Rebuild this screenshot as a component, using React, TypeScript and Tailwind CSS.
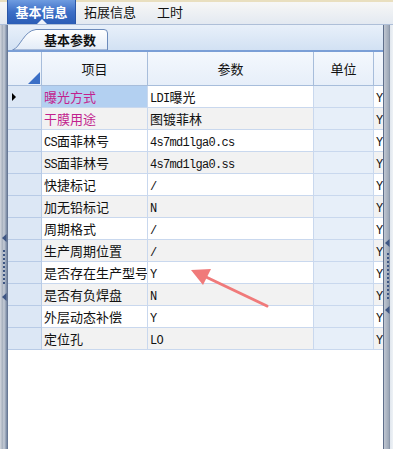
import React from "react";

type Row = { label: string; value: string; pink?: boolean };

const rows: Row[] = [
  { label: "曝光方式", value: "LDI曝光", pink: true },
  { label: "干膜用途", value: "图镀菲林", pink: true },
  { label: "CS面菲林号", value: "4s7md1lga0.cs" },
  { label: "SS面菲林号", value: "4s7md1lga0.ss" },
  { label: "快捷标记", value: "/" },
  { label: "加无铅标记", value: "N" },
  { label: "周期格式", value: "/" },
  { label: "生产周期位置", value: "/" },
  { label: "是否存在生产型号", value: "Y" },
  { label: "是否有负焊盘", value: "N" },
  { label: "外层动态补偿", value: "Y" },
  { label: "定位孔", value: "LO" },
];

// latin runs get the narrow mono font, like the half-width glyphs of the original
function Mixed({ text }: { text: string }) {
  return (
    <>
      {text
        .split(/([\x20-\x7e]+)/)
        .filter(Boolean)
        .map((s, i) =>
          /^[\x20-\x7e]+$/.test(s) ? (
            <span key={i} className="font-['Liberation_Mono',monospace] text-[12px] tracking-[-0.7px]">
              {s}
            </span>
          ) : (
            <span key={i}>{s}</span>
          )
        )}
    </>
  );
}

function SplitArrow() {
  return (
    <svg width="5" height="8" viewBox="0 0 5 8">
      <path d="M4.5 0 L0 4 L4.5 8Z" fill="#3e5684" />
    </svg>
  );
}

export default function App() {
  return (
    <div className="relative w-[393px] h-[449px] overflow-hidden bg-white font-['Noto_Sans_CJK_SC',sans-serif] text-[13px] text-[#111]">
      {/* Top tabs */}
      <div className="flex items-stretch h-[25px] border-b border-[#aebfd8] bg-[linear-gradient(to_bottom,#e9dfbf_0,#e9dfbf_2px,#f7f7f6_2px,#e3e9f1_100%)]">
        <div className="relative ml-[7px] w-[69px] flex items-center justify-center font-bold text-white bg-[linear-gradient(to_bottom,#6f9ce0,#3c6ec6_50%,#2b5db6)] border-x border-[#2a56a6]">
          基本信息
          <div className="absolute bottom-0 left-[29px] w-0 h-0 border-x-[5px] border-x-transparent border-b-[5px] border-b-[#eef3fa]" />
        </div>
        <div className="flex items-center ml-[8px]">拓展信息</div>
        <div className="flex items-center ml-[21px]">工时</div>
      </div>

      <div className="flex h-[424px]">
        {/* Left splitter */}
        <div className="w-[8px] flex flex-col items-start pl-[2px] pt-[209px] bg-[linear-gradient(to_right,#d3d7de,#a9b2bf_30%,#c5ccd7_50%,#8796ad_78%,#5c6d8c)]">
          <SplitArrow />
          <div className="mt-[8px] ml-[1px] h-[36px] w-[2px] bg-[repeating-linear-gradient(to_bottom,#3e5684_0_2px,transparent_2px_4px)]" />
          <div className="mt-[7px]">
            <SplitArrow />
          </div>
        </div>

        {/* Main */}
        <div className="w-[375px] flex flex-col">
          {/* Sub tab strip */}
          <div className="h-[25px] flex items-end pl-[4px] bg-[linear-gradient(to_bottom,#e8f0fa,#d2e1f3)]">
            <div className="relative w-[96px] h-[21px] flex items-center pl-[32px] font-bold">
              <svg className="absolute inset-0" width="96" height="21" viewBox="0 0 96 21">
                <defs>
                  <linearGradient id="subtab" x1="0" y1="0" x2="0" y2="1">
                    <stop offset="0" stopColor="#ffffff" />
                    <stop offset="1" stopColor="#e2ebf7" />
                  </linearGradient>
                </defs>
                <path
                  d="M0.5 21 C 8 19, 12 1.5, 24 0.5 L 92 0.5 Q 95.5 0.5 95.5 4 L 95.5 21 Z"
                  fill="url(#subtab)"
                  stroke="#6c8bbb"
                />
              </svg>
              <span className="relative">基本参数</span>
            </div>
          </div>

          {/* Grid */}
          <div className="flex flex-col">
            <div className="flex h-[36px] border-t-2 border-[#7b9fd6] bg-[linear-gradient(to_bottom,#f4f8fd,#e6eef9)]">
              <div className="w-[34px] flex items-end justify-end pr-[1px] pb-[1px] border-r border-b border-[#a7bddb]">
                <svg width="12" height="12" viewBox="0 0 12 12">
                  <path d="M12 0 L12 12 L0 12Z" fill="#3b6fc6" />
                </svg>
              </div>
              <div className="w-[106px] flex items-center justify-center border-r border-b border-[#a7bddb]">项目</div>
              <div className="w-[166px] flex items-center justify-center border-r border-b border-[#a7bddb]">参数</div>
              <div className="w-[60px] flex items-center justify-center border-r border-b border-[#a7bddb]">单位</div>
              <div className="w-[9px] border-b border-[#a7bddb]" />
            </div>

            {rows.map((r, i) => {
              const odd = i % 2 === 1;
              const rowBg = odd ? "bg-[#f2f2f2]" : "bg-white";
              return (
                <div key={r.label} className="flex h-[22px] leading-[21px]">
                  <div className="w-[34px] flex items-center pl-[4px] bg-[#dce7f5] border-r border-b border-[#b8cbe6]">
                    {i === 0 && (
                      <svg width="4" height="8" viewBox="0 0 4 8">
                        <path d="M0 0 L4 4 L0 8Z" fill="#000" />
                      </svg>
                    )}
                  </div>
                  <div
                    className={`w-[106px] pl-[2px] whitespace-nowrap overflow-hidden border-r border-b border-[#c9d8ee] ${
                      i === 0 ? "bg-[#b3d0f1]" : rowBg
                    } ${r.pink ? "text-[#c21f8e]" : ""}`}
                  >
                    <Mixed text={r.label} />
                  </div>
                  <div className={`w-[166px] pl-[2px] whitespace-nowrap overflow-hidden border-r border-b border-[#c9d8ee] ${rowBg}`}>
                    <Mixed text={r.value} />
                  </div>
                  <div className="w-[60px] bg-[#e7eff9] border-r border-b border-[#c9d8ee]" />
                  <div className={`w-[9px] pl-[2px] overflow-hidden border-b border-[#c9d8ee] ${rowBg}`}>
                    <span className="font-['Liberation_Mono',monospace] text-[12px]">Y</span>
                  </div>
                </div>
              );
            })}
          </div>
        </div>

        {/* Right splitter */}
        <div className="w-[10px] flex flex-col items-start pl-[2px] pt-[214px] bg-[linear-gradient(to_right,#5f6f8c_0,#5f6f8c_1px,#c0c7d2_1px,#9ba6b6_60%,#7e8ba1_70%,#e1e7ee_70%,#eef2f6)]">
          <SplitArrow />
          <div className="mt-[6px] ml-[2px] h-[47px] w-[2px] bg-[repeating-linear-gradient(to_bottom,#3e5684_0_2px,transparent_2px_4px)]" />
          <div className="mt-[6px]">
            <SplitArrow />
          </div>
        </div>
      </div>

      {/* Annotation arrow */}
      <svg className="absolute left-0 top-0 pointer-events-none" width="393" height="449" viewBox="0 0 393 449">
        <line x1="267" y1="306" x2="206" y2="277" stroke="#f07a7a" strokeWidth="3" strokeLinecap="round" />
        <path d="M191 270 L211 269 L203 285 Z" fill="#f07a7a" />
      </svg>
    </div>
  );
}
